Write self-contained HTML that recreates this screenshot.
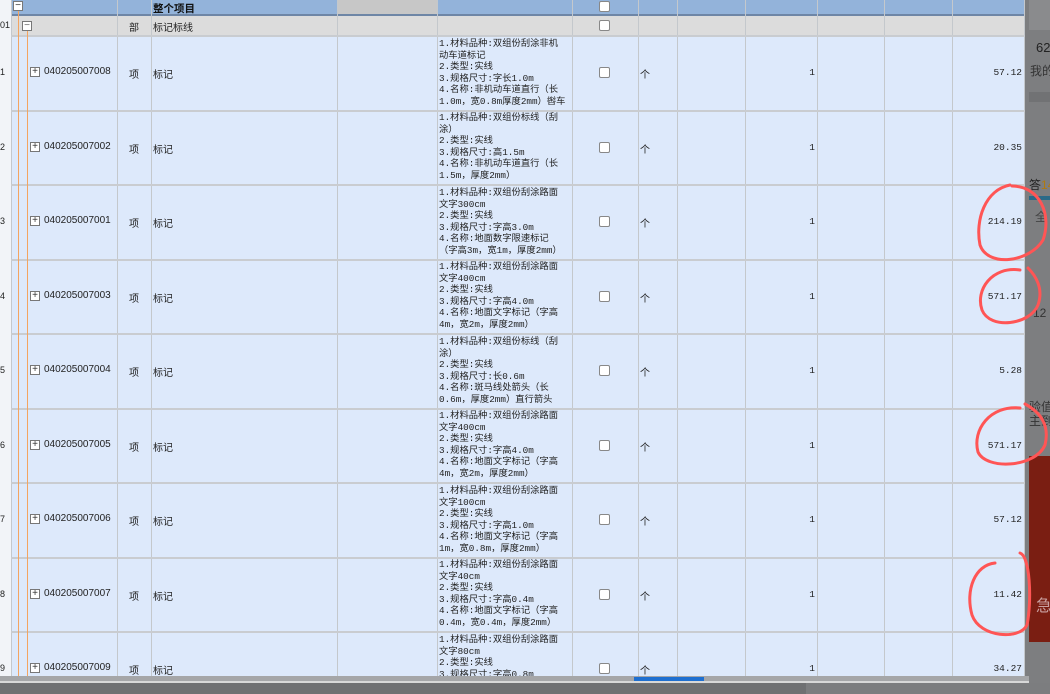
<!DOCTYPE html>
<html><head><meta charset="utf-8"><style>
*{margin:0;padding:0;box-sizing:border-box}
body{width:1050px;height:694px;overflow:hidden;background:#7a7b7c;position:relative;font-family:"Liberation Sans","Noto Sans CJK SC",sans-serif;font-size:10px;color:#222}
.a{position:absolute;white-space:nowrap}
.vl{position:absolute;top:0;width:1px;height:676px;background:#c4c8cc}
.hl{position:absolute;left:11px;width:1014px;height:2px;background:#c9ccd0}
.cb{position:absolute;width:11px;height:11px;border:1px solid #888;background:#fff;border-radius:2px}
.pm{position:absolute;width:10px;height:10px;border:1px solid #777;background:#fff;font-size:10px;line-height:8px;text-align:center;color:#333}
.desc{position:absolute;left:439px;width:132px;font-family:"Liberation Mono","Noto Sans CJK SC",monospace;font-size:9.3px;line-height:11.6px;color:#222;white-space:nowrap;overflow:hidden}
.r{position:absolute;text-align:right;font-family:"Liberation Mono",monospace;font-size:9.5px}
#strip{position:absolute;left:1025px;top:0;width:25px;height:694px;background:#7d7e80;overflow:hidden}
#strip div{position:absolute;white-space:nowrap}
</style></head><body>
<div id="strip">
<div style="left:4px;top:0;width:21px;height:30px;background:#8a8b8d"></div>
<div style="left:11px;top:40px;font-size:13px;color:#222">62</div>
<div style="left:5px;top:62px;font-size:12px;color:#333">我的</div>
<div style="left:4px;top:92px;width:21px;height:10px;background:#717274"></div>
<div style="left:4px;top:176px;font-size:12px;color:#222">答<span style="color:#b07a10">14</span></div>
<div style="left:4px;top:196px;width:21px;height:4px;background:#2a6a88"></div>
<div style="left:10px;top:208px;font-size:12px;color:#444">全</div>
<div style="left:4px;top:306px;font-size:12px;color:#333">-12</div>
<div style="left:4px;top:400px;font-size:12px;color:#333;line-height:14px">验值<br>主到</div>
<div style="left:4px;top:456px;width:21px;height:186px;background:#7a1e12"></div>
<div style="left:11px;top:592px;font-size:16px;color:#c9a0a0">急</div>
</div>
<!-- table background -->
<div class="a" style="left:0;top:0;width:1025px;height:676px;background:#dde9fb"></div>
<div class="a" style="left:0;top:0;width:11px;height:676px;background:#f2f4f8"></div>
<div class="a" style="left:11px;top:0;width:1014px;height:15px;background:#93b3da"></div>
<div class="a" style="left:337px;top:0;width:100px;height:15px;background:#c7c7c7"></div>
<div class="a" style="left:11px;top:15px;width:1014px;height:21px;background:#dcdcdc"></div>
<div class="a" style="left:11px;top:14px;width:1014px;height:2px;background:#6e86a6"></div>
<div class="vl" style="left:11px"></div><div class="vl" style="left:117px"></div><div class="vl" style="left:151px"></div><div class="vl" style="left:337px"></div><div class="vl" style="left:437px"></div><div class="vl" style="left:572px"></div><div class="vl" style="left:638px"></div><div class="vl" style="left:677px"></div><div class="vl" style="left:745px"></div><div class="vl" style="left:817px"></div><div class="vl" style="left:884px"></div><div class="vl" style="left:952px"></div><div class="vl" style="left:1024px"></div>
<div class="hl" style="top:35px"></div><div class="hl" style="top:110px"></div><div class="hl" style="top:184px"></div><div class="hl" style="top:259px"></div><div class="hl" style="top:333px"></div><div class="hl" style="top:408px"></div><div class="hl" style="top:482px"></div><div class="hl" style="top:557px"></div><div class="hl" style="top:631px"></div>
<div class="a" style="left:18px;top:8px;width:1px;height:668px;background:#f4a460"></div>
<div class="a" style="left:27px;top:30px;width:1px;height:646px;background:#f4a460"></div>
<div class="pm" style="left:13px;top:1px">−</div>
<div class="a" style="left:153px;top:1px;font-weight:bold;font-size:10.5px;color:#111">整个项目</div>
<div class="cb" style="left:599px;top:1px"></div>
<div class="a" style="left:0;top:20px;font-size:9px">01</div>
<div class="pm" style="left:22px;top:21px;color:#666">−</div>
<div class="a" style="left:129px;top:19px">部</div>
<div class="a" style="left:153px;top:19px">标记标线</div>
<div class="cb" style="left:599px;top:20px"></div>

<div class="a" style="left:0;top:67px;font-size:9px">1</div><div class="pm" style="left:30px;top:67px">+</div><div class="a" style="left:44px;top:66px">040205007008</div><div class="a" style="left:129px;top:66px">项</div><div class="a" style="left:153px;top:66px">标记</div><div class="cb" style="left:599px;top:67px"></div><div class="a" style="left:640px;top:66px">个</div><div class="r" style="left:700px;width:115px;top:67px">1</div><div class="r" style="left:900px;width:122px;top:67px">57.12</div>
<div class="desc" style="top:38px">1.材料品种:双组份刮涂非机<br>动车道标记<br>2.类型:实线<br>3.规格尺寸:字长1.0m<br>4.名称:非机动车道直行（长<br>1.0m，宽0.8m厚度2mm）辔车</div>

<div class="a" style="left:0;top:142px;font-size:9px">2</div><div class="pm" style="left:30px;top:142px">+</div><div class="a" style="left:44px;top:141px">040205007002</div><div class="a" style="left:129px;top:141px">项</div><div class="a" style="left:153px;top:141px">标记</div><div class="cb" style="left:599px;top:142px"></div><div class="a" style="left:640px;top:141px">个</div><div class="r" style="left:700px;width:115px;top:142px">1</div><div class="r" style="left:900px;width:122px;top:142px">20.35</div>
<div class="desc" style="top:112px">1.材料品种:双组份标线（刮<br>涂）<br>2.类型:实线<br>3.规格尺寸:高1.5m<br>4.名称:非机动车道直行（长<br>1.5m，厚度2mm）</div>

<div class="a" style="left:0;top:216px;font-size:9px">3</div><div class="pm" style="left:30px;top:216px">+</div><div class="a" style="left:44px;top:215px">040205007001</div><div class="a" style="left:129px;top:215px">项</div><div class="a" style="left:153px;top:215px">标记</div><div class="cb" style="left:599px;top:216px"></div><div class="a" style="left:640px;top:215px">个</div><div class="r" style="left:700px;width:115px;top:216px">1</div><div class="r" style="left:900px;width:122px;top:216px">214.19</div>
<div class="desc" style="top:187px">1.材料品种:双组份刮涂路面<br>文字300cm<br>2.类型:实线<br>3.规格尺寸:字高3.0m<br>4.名称:地面数字限速标记<br>（字高3m，宽1m，厚度2mm）</div>

<div class="a" style="left:0;top:291px;font-size:9px">4</div><div class="pm" style="left:30px;top:291px">+</div><div class="a" style="left:44px;top:290px">040205007003</div><div class="a" style="left:129px;top:290px">项</div><div class="a" style="left:153px;top:290px">标记</div><div class="cb" style="left:599px;top:291px"></div><div class="a" style="left:640px;top:290px">个</div><div class="r" style="left:700px;width:115px;top:291px">1</div><div class="r" style="left:900px;width:122px;top:291px">571.17</div>
<div class="desc" style="top:261px">1.材料品种:双组份刮涂路面<br>文字400cm<br>2.类型:实线<br>3.规格尺寸:字高4.0m<br>4.名称:地面文字标记（字高<br>4m，宽2m，厚度2mm）</div>

<div class="a" style="left:0;top:365px;font-size:9px">5</div><div class="pm" style="left:30px;top:365px">+</div><div class="a" style="left:44px;top:364px">040205007004</div><div class="a" style="left:129px;top:364px">项</div><div class="a" style="left:153px;top:364px">标记</div><div class="cb" style="left:599px;top:365px"></div><div class="a" style="left:640px;top:364px">个</div><div class="r" style="left:700px;width:115px;top:365px">1</div><div class="r" style="left:900px;width:122px;top:365px">5.28</div>
<div class="desc" style="top:336px">1.材料品种:双组份标线（刮<br>涂）<br>2.类型:实线<br>3.规格尺寸:长0.6m<br>4.名称:斑马线处箭头（长<br>0.6m，厚度2mm）直行箭头</div>

<div class="a" style="left:0;top:440px;font-size:9px">6</div><div class="pm" style="left:30px;top:440px">+</div><div class="a" style="left:44px;top:439px">040205007005</div><div class="a" style="left:129px;top:439px">项</div><div class="a" style="left:153px;top:439px">标记</div><div class="cb" style="left:599px;top:440px"></div><div class="a" style="left:640px;top:439px">个</div><div class="r" style="left:700px;width:115px;top:440px">1</div><div class="r" style="left:900px;width:122px;top:440px">571.17</div>
<div class="desc" style="top:410px">1.材料品种:双组份刮涂路面<br>文字400cm<br>2.类型:实线<br>3.规格尺寸:字高4.0m<br>4.名称:地面文字标记（字高<br>4m，宽2m，厚度2mm）</div>

<div class="a" style="left:0;top:514px;font-size:9px">7</div><div class="pm" style="left:30px;top:514px">+</div><div class="a" style="left:44px;top:513px">040205007006</div><div class="a" style="left:129px;top:513px">项</div><div class="a" style="left:153px;top:513px">标记</div><div class="cb" style="left:599px;top:514px"></div><div class="a" style="left:640px;top:513px">个</div><div class="r" style="left:700px;width:115px;top:514px">1</div><div class="r" style="left:900px;width:122px;top:514px">57.12</div>
<div class="desc" style="top:485px">1.材料品种:双组份刮涂路面<br>文字100cm<br>2.类型:实线<br>3.规格尺寸:字高1.0m<br>4.名称:地面文字标记（字高<br>1m，宽0.8m，厚度2mm）</div>

<div class="a" style="left:0;top:589px;font-size:9px">8</div><div class="pm" style="left:30px;top:589px">+</div><div class="a" style="left:44px;top:588px">040205007007</div><div class="a" style="left:129px;top:588px">项</div><div class="a" style="left:153px;top:588px">标记</div><div class="cb" style="left:599px;top:589px"></div><div class="a" style="left:640px;top:588px">个</div><div class="r" style="left:700px;width:115px;top:589px">1</div><div class="r" style="left:900px;width:122px;top:589px">11.42</div>
<div class="desc" style="top:559px">1.材料品种:双组份刮涂路面<br>文字40cm<br>2.类型:实线<br>3.规格尺寸:字高0.4m<br>4.名称:地面文字标记（字高<br>0.4m，宽0.4m，厚度2mm）</div>

<div class="a" style="left:0;top:663px;font-size:9px">9</div><div class="pm" style="left:30px;top:663px">+</div><div class="a" style="left:44px;top:662px">040205007009</div><div class="a" style="left:129px;top:662px">项</div><div class="a" style="left:153px;top:662px">标记</div><div class="cb" style="left:599px;top:663px"></div><div class="a" style="left:640px;top:662px">个</div><div class="r" style="left:700px;width:115px;top:663px">1</div><div class="r" style="left:900px;width:122px;top:663px">34.27</div>
<div class="desc" style="top:634px;height:42px">1.材料品种:双组份刮涂路面<br>文字80cm<br>2.类型:实线<br>3.规格尺寸:字高0.8m</div>

<div class="a" style="left:0;top:676px;width:1029px;height:5px;background:#a5a6a8"></div>
<div class="a" style="left:634px;top:677px;width:70px;height:4px;background:#1e6fd0"></div>
<div class="a" style="left:0;top:681px;width:1029px;height:2px;background:#d8d8d8"></div>
<div class="a" style="left:0;top:683px;width:806px;height:11px;background:#6f7072"></div>
<div class="a" style="left:806px;top:683px;width:244px;height:11px;background:#7c7d7f"></div>
<svg class="a" style="left:0;top:0" width="1050" height="694">
<g fill="none" stroke="#f55" stroke-width="3" stroke-linecap="round">
<path d="M1010 185 C985 190 975 220 980 245 C988 268 1030 262 1043 240 C1052 215 1040 186 1012 186"/>
<path d="M1020 270 C992 266 975 290 982 310 C990 330 1030 325 1038 305 C1044 288 1035 275 1028 268"/>
<path d="M1020 408 C990 405 972 430 978 452 C986 470 1035 468 1045 445 C1050 425 1040 412 1025 404"/>
<path d="M1020 553 C1030 556 1032 600 1027 625 C1020 640 980 638 972 615 C965 590 975 565 995 563"/>
</g></svg>
</body></html>
